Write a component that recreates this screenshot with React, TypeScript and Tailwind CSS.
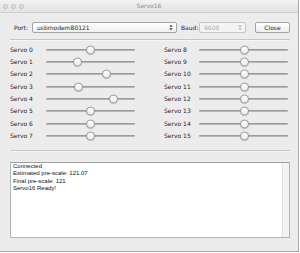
import React from "react";

const leftThumbs = [44, 31.7, 60, 32.3, 67.3, 44.7, 44.7, 44.7];
const rightThumbs = [45.5, 45.5, 45.5, 45.5, 45.5, 45.5, 45.5, 45.5];

const ui = { fontFamily: '"DejaVu Sans", Verdana, sans-serif' };

function Slider({ pos }: { pos: number }) {
  return (
    <div className="relative w-[89px] h-full flex items-center">
      <div className="w-full h-[2px] rounded-full bg-gradient-to-b from-[#8e8e8e] to-[#c4c4c4]" />
      <div
        className="absolute top-1/2 -translate-y-1/2 w-[9px] h-[9px] rounded-full bg-gradient-to-b from-white to-[#ececec] border border-[#9c9c9c] shadow-[0_0.5px_1px_rgba(0,0,0,0.25)]"
        style={{ left: pos - 4.5 }}
      />
    </div>
  );
}

function Row({ label, pos, labelW }: { label: string; pos: number; labelW: string }) {
  return (
    <div className="flex items-center h-[12.33px]">
      <div className={`${labelW} text-[6px] leading-none text-[#1e1e1e]`} style={ui}>{label}</div>
      <Slider pos={pos} />
    </div>
  );
}

function Arrows({ color }: { color: string }) {
  return (
    <svg width="4" height="7" viewBox="0 0 4 7">
      <path d="M0.3 2.7 L2 0.8 L3.7 2.7 Z" fill={color} />
      <path d="M0.3 4.3 L2 6.2 L3.7 4.3 Z" fill={color} />
    </svg>
  );
}

export default function App() {
  return (
    <div className="w-[300px] h-[253px] bg-white" style={{ fontFamily: '"Liberation Sans", Arial, sans-serif' }}>
      <div className="w-[299px] h-[252px] bg-[#ececec] border-r border-b border-[#a9a9a9] flex flex-col">
        {/* title bar */}
        <div className="relative h-[13px] shrink-0 bg-gradient-to-b from-[#f3f3f3] to-[#e2e2e2] border-b border-[#cfcfcf] flex items-center pl-[3px] gap-[3px]">
          <div className="w-[5px] h-[5px] rounded-full border border-[#bdbdbd] bg-gradient-to-b from-[#ececec] to-[#d6d6d6]" />
          <div className="w-[5px] h-[5px] rounded-full border border-[#bdbdbd] bg-gradient-to-b from-[#ececec] to-[#d6d6d6]" />
          <div className="w-[5px] h-[5px] rounded-full border border-[#bdbdbd] bg-gradient-to-b from-[#ececec] to-[#d6d6d6]" />
          <div className="absolute inset-0 flex items-center justify-center text-[6px] leading-none text-[#8a8a8a]" style={ui}>
            Servo16
          </div>
        </div>

        {/* port row */}
        <div className="mt-[9px] h-[11px] flex items-center pl-[14px]" style={ui}>
          <div className="w-[18px] text-[6px] leading-none text-[#1e1e1e]">Port:</div>
          <div className="w-[145px] h-full rounded-[2px] border border-[#a4a4a4] bg-gradient-to-b from-white to-[#f0f0f0] flex items-center justify-between pl-[4px] pr-[3px]">
            <span className="text-[6px] leading-none text-[#1e1e1e]">usbmodem80121</span>
            <Arrows color="#3a3a3a" />
          </div>
          <div className="ml-[4px] w-[18px] text-[6px] leading-none text-[#1e1e1e]">Baud:</div>
          <div className="w-[47px] h-full rounded-[2px] border border-[#c6c6c6] bg-[#f4f4f4] flex items-center justify-between pl-[4px] pr-[3px]">
            <span className="text-[6px] leading-none text-[#a8a8a8]">9600</span>
            <Arrows color="#b0b0b0" />
          </div>
          <div className="ml-[9px] w-[35px] h-full rounded-[2px] border border-[#a4a4a4] bg-gradient-to-b from-white to-[#eeeeee] flex items-center justify-center text-[6px] leading-none text-[#1e1e1e]">
            Close
          </div>
        </div>

        {/* separator */}
        <div className="mt-[6px] mx-[10px] w-[280px] border-t border-[#c6c6c6] border-b border-b-[#f6f6f6]" />

        {/* sliders */}
        <div className="mt-[2.5px] pl-[10px] flex gap-[29px]">
          <div className="flex flex-col">
            {leftThumbs.map((p, i) => (
              <Row key={i} label={`Servo ${i}`} pos={p} labelW="w-[36px]" />
            ))}
          </div>
          <div className="flex flex-col">
            {rightThumbs.map((p, i) => (
              <Row key={i} label={`Servo ${i + 8}`} pos={p} labelW="w-[35px]" />
            ))}
          </div>
        </div>

        {/* separator */}
        <div className="mt-[8px] mx-[10px] w-[280px] border-t border-[#c6c6c6] border-b border-b-[#f6f6f6]" />

        {/* text area */}
        <div className="mt-[10px] ml-[10px] w-[280px] h-[76px] bg-white border border-[#b4b4b4] border-t-[#a0a0a0] flex">
          <div className="flex-1 pl-[2px] text-[6px] leading-[7.3px] text-[#111]">
            <div>Connected</div>
            <div>Estimated pre-scale: 121.07</div>
            <div>Final pre-scale: 121</div>
            <div>Servo16 Ready!</div>
          </div>
          <div className="w-[7px] h-full bg-[#f3f3f3] border-l border-[#e2e2e2]" />
        </div>
      </div>
    </div>
  );
}
